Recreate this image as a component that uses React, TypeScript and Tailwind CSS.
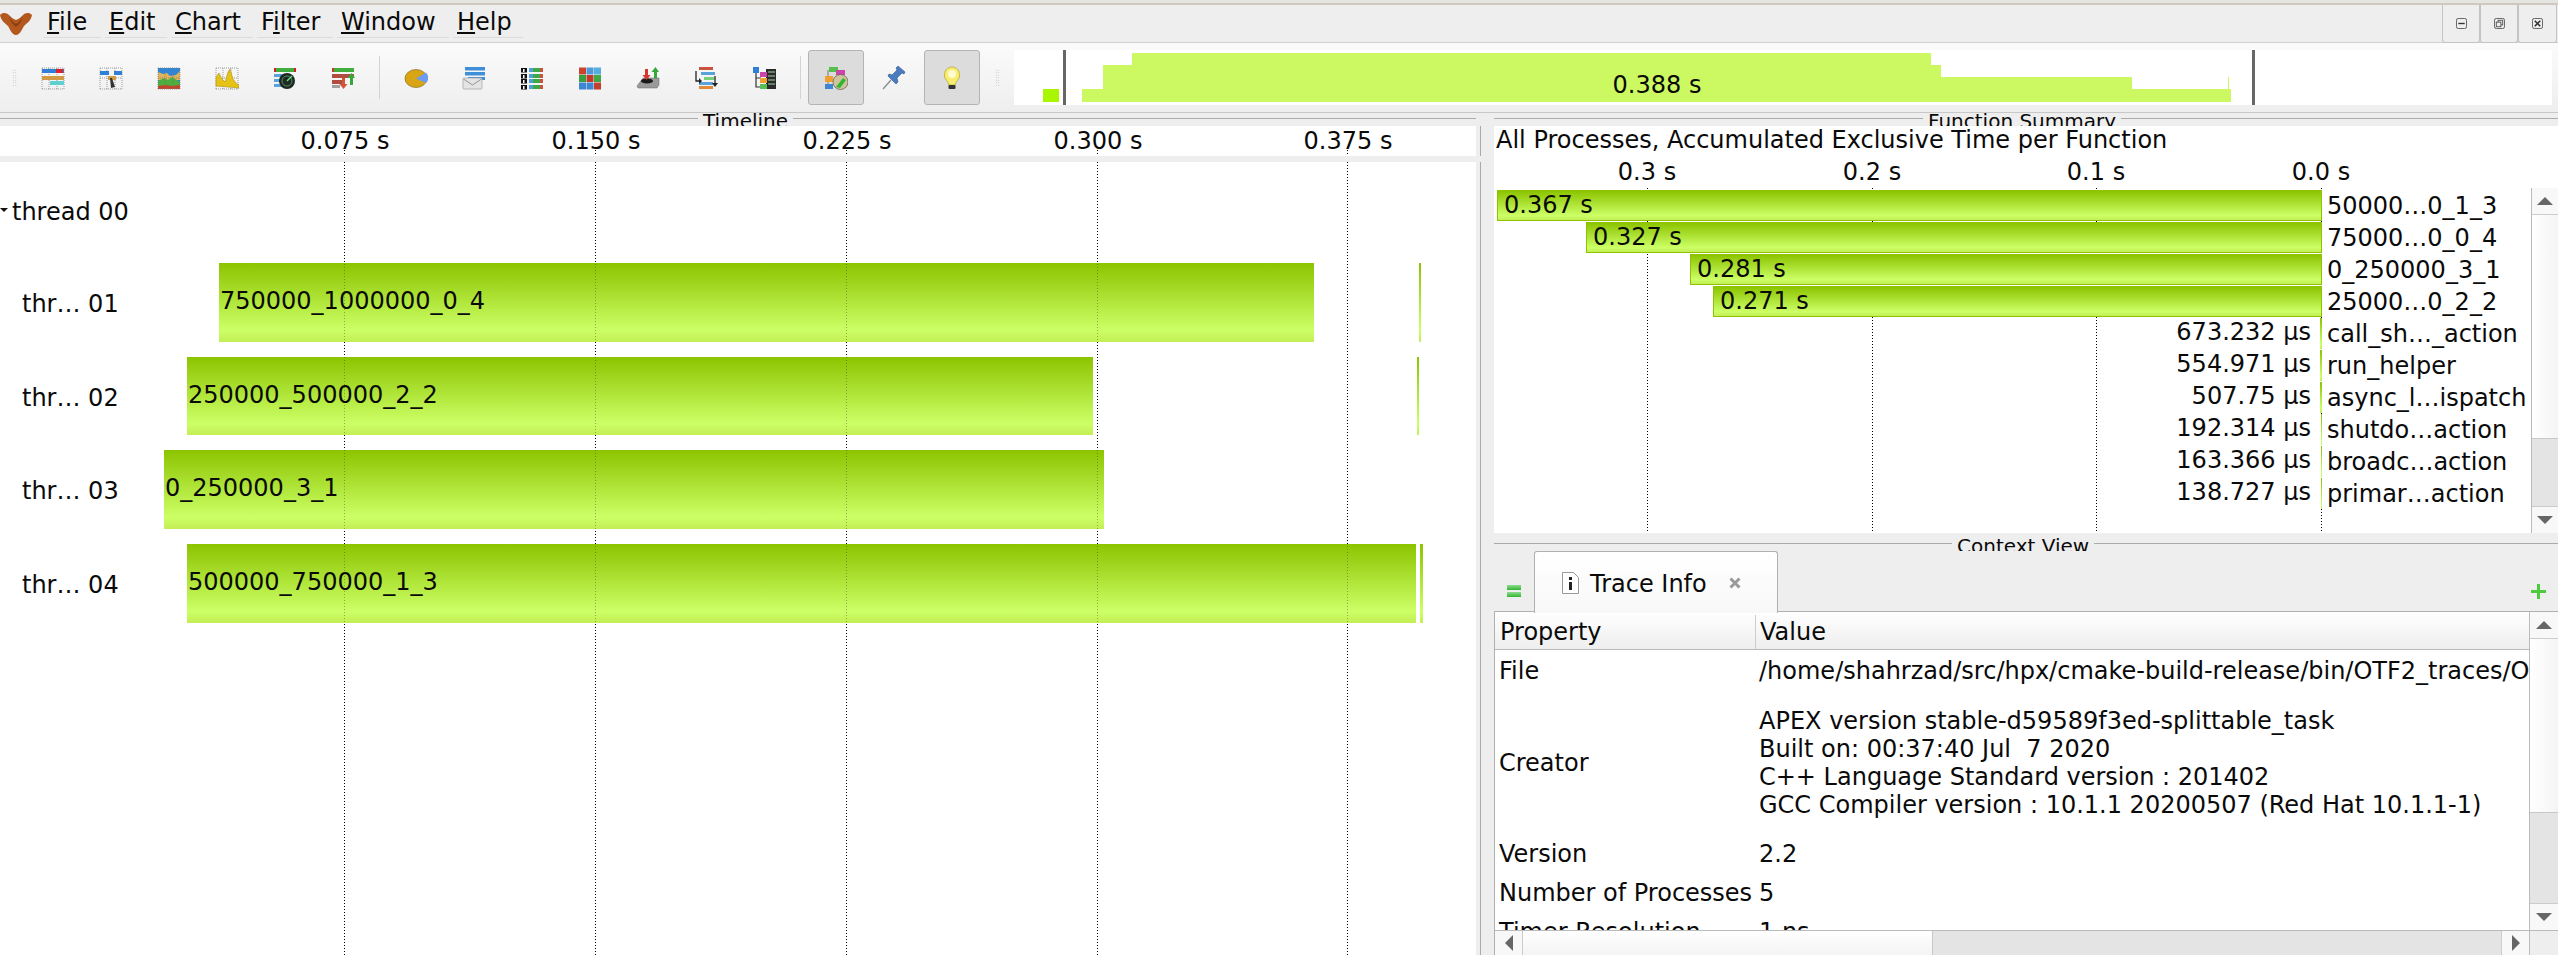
import type { ReactNode } from "react";

const menuItems = [
  { key: "F", rest: "ile", cls: "w-[58px]" },
  { key: "E", rest: "dit", cls: "w-[62px]" },
  { key: "C", rest: "hart", cls: "w-[82px]" },
  { key: "i", pre: "F", rest: "lter", cls: "w-[76px]" },
  { key: "W", rest: "indow", cls: "w-[112px]" },
  { key: "H", rest: "elp", cls: "w-[70px]" },
];

const timelineTicks = [
  { x: 344, label: "0.075 s" },
  { x: 595, label: "0.150 s" },
  { x: 846, label: "0.225 s" },
  { x: 1097, label: "0.300 s" },
  { x: 1347, label: "0.375 s" },
];

// offsets are relative to the top of the chart (y=162)
const timelineBars = [
  { left: 219, width: 1095, top: 101, height: 79, label: "750000_1000000_0_4" },
  { left: 1419, width: 2, top: 101, height: 79, label: "" },
  { left: 187, width: 906, top: 195, height: 78, label: "250000_500000_2_2" },
  { left: 1417, width: 2, top: 195, height: 78, label: "" },
  { left: 164, width: 940, top: 288, height: 79, label: "0_250000_3_1" },
  { left: 187, width: 1229, top: 382, height: 79, label: "500000_750000_1_3" },
  { left: 1420, width: 3, top: 382, height: 79, label: "" },
];

const threads = [
  { label: "thr… 01", top: 128 },
  { label: "thr… 02", top: 222 },
  { label: "thr… 03", top: 315 },
  { label: "thr… 04", top: 409 },
];

const overviewSteps = [
  { x: 1081, w: 21, top: 90 },
  { x: 1102, w: 29, top: 66 },
  { x: 1131, w: 799, top: 54 },
  { x: 1930, w: 10, top: 66 },
  { x: 1940, w: 191, top: 78 },
  { x: 2131, w: 99, top: 90 },
  { x: 2227, w: 1, top: 78 },
];

const summaryTicks = [
  { x: 1647, label: "0.3 s" },
  { x: 1872, label: "0.2 s" },
  { x: 2096, label: "0.1 s" },
  { x: 2321, label: "0.0 s" },
];

const summaryRows = [
  { name: "50000…0_1_3", left: 1497, value: "0.367 s" },
  { name: "75000…0_0_4", left: 1586, value: "0.327 s" },
  { name: "0_250000_3_1", left: 1690, value: "0.281 s" },
  { name: "25000…0_2_2", left: 1713, value: "0.271 s" },
  { name: "call_sh…_action", left: 2320, value: "673.232 µs" },
  { name: "run_helper", left: 2320, value: "554.971 µs" },
  { name: "async_l…ispatch", left: 2320, value: "507.75 µs" },
  { name: "shutdo…action", left: 2321, value: "192.314 µs" },
  { name: "broadc…action", left: 2321, value: "163.366 µs" },
  { name: "primar…action", left: 2321, value: "138.727 µs" },
];

const barGradient = "bg-[linear-gradient(to_bottom,#8cc400_0%,#ccff66_85%,#c4ee55_100%)]";

function DockTitle({ title, leftWidth }: { title: string; leftWidth: number }) {
  return (
    <div className="flex h-[13px] shrink-0 overflow-hidden">
      <div className="mt-[5px] h-px bg-[#aaaaaa]" style={{ width: leftWidth }} />
      <span className="-mt-[6px] whitespace-nowrap px-[5px] text-[20px] leading-[28px]">{title}</span>
      <div className="mt-[5px] h-px flex-1 bg-[#aaaaaa]" />
    </div>
  );
}

function Handle() {
  return <div className="h-[17px] w-[5px] bg-[radial-gradient(circle,#b5b5b5_0.6px,transparent_0.8px)] bg-[length:2.5px_2.5px]" />;
}

function Tri({ dir }: { dir: "up" | "down" | "left" | "right" }) {
  const pts = { up: "0,8 8,0 16,8", down: "0,0 16,0 8,8", left: "8,0 8,16 0,8", right: "0,0 0,16 8,8" }[dir];
  const box = dir === "up" || dir === "down" ? "0 0 16 8" : "0 0 8 16";
  return (
    <svg viewBox={box} className={dir === "up" || dir === "down" ? "h-[8px] w-[16px]" : "h-[16px] w-[8px]"}>
      <polygon points={pts} fill="#666666" />
    </svg>
  );
}

function VScroll({ thumb, track }: { thumb: string; track: string }) {
  return (
    <div className="flex h-full flex-col border-l border-[#bbbbbb] bg-[#e4e4e4]">
      <div className="flex h-[27px] items-center justify-center border-b border-[#cccccc] bg-[#f8f8f8]">
        <Tri dir="up" />
      </div>
      <div className={`${thumb} border-b border-[#c8c8c8] bg-[linear-gradient(to_right,#ffffff,#f4f4f4)]`} />
      <div className={track} />
      <div className="flex h-[27px] items-center justify-center border-t border-[#cccccc] bg-[#f8f8f8]">
        <Tri dir="down" />
      </div>
    </div>
  );
}

function Dotted({ left, top, bottom, faint }: { left: number; top: number; bottom?: number; faint?: boolean }) {
  return (
    <div
      className={`absolute w-px bg-[repeating-linear-gradient(to_bottom,#000000_0,#000000_1px,transparent_1px,transparent_3px)] ${faint ? "opacity-30" : ""}`}
      style={{ left, top, bottom: bottom ?? 0 }}
    />
  );
}

/* ---------- toolbar icons ---------- */

function Ico({ children }: { children: ReactNode }) {
  return (
    <svg viewBox="0 0 24 24" className="h-[24px] w-[24px]">
      {children}
    </svg>
  );
}

function GridLines() {
  return (
    <g stroke="#777777" strokeWidth="0.7" strokeDasharray="1 1">
      <path d="M1 2V23M8 2V23M16 2V23M23 2V23M1 2H23M1 12H23M1 23H23" fill="none" />
    </g>
  );
}

const icons: ReactNode[] = [
  <Ico key="a">
    <GridLines />
    <rect x="1" y="3" width="22" height="4" fill="#2f7fd6" />
    <rect x="15" y="3" width="7" height="4" fill="#e0202a" />
    <rect x="1" y="10" width="22" height="4" fill="#d19a45" />
    <rect x="9" y="15" width="14" height="4" fill="#5fd0d0" />
  </Ico>,
  <Ico key="b">
    <GridLines />
    <rect x="1" y="5" width="9" height="4" fill="#2f7fd6" />
    <rect x="15" y="5" width="8" height="4" fill="#2f7fd6" />
    <rect x="9" y="10" width="8" height="4" fill="#d19a45" />
    <path d="M11 12l2 0 3 9-4 1z" fill="#333333" />
  </Ico>,
  <Ico key="c">
    <rect x="1" y="2" width="22" height="21" fill="#2f86d6" />
    <path d="M1 6l5 2 4-1 3 3 6-1 4-4v9H1z" fill="#e2b45a" />
    <path d="M1 15l6-3 4 2 4-3 8 5v5H1z" fill="#4cae3d" />
    <path d="M1 20l8-1 6 1 8-1v4H1z" fill="#c4452c" />
    <GridLines />
  </Ico>,
  <Ico key="d">
    <GridLines />
    <path d="M1 20V11l3-4 3 6 3 3 3-10 2-3 3 10 3 4 3 2v3z" fill="#e6c214" stroke="#9b8410" strokeWidth="0.5" />
  </Ico>,
  <Ico key="e">
    <rect x="1" y="2" width="22" height="4" fill="#3fae3d" />
    <rect x="1" y="2" width="2" height="4" fill="#d02020" />
    <rect x="21" y="2" width="2" height="4" fill="#d02020" />
    <rect x="1" y="8" width="9" height="3" fill="#58a3dc" />
    <rect x="1" y="13" width="7" height="3" fill="#58a3dc" />
    <rect x="1" y="18" width="8" height="3" fill="#58a3dc" />
    <circle cx="14" cy="15" r="8" fill="#1c2a22" />
    <circle cx="14" cy="15" r="5" fill="none" stroke="#5c8a66" strokeWidth="1" />
    <path d="M14 15l5-5" stroke="#62e082" strokeWidth="1.5" />
  </Ico>,
  <Ico key="f">
    <rect x="1" y="2" width="22" height="4" fill="#3fae3d" />
    <rect x="1" y="2" width="2" height="4" fill="#c93a2a" />
    <rect x="1" y="8" width="22" height="4" fill="#b04c40" />
    <rect x="1" y="14" width="10" height="4" fill="#b04c40" />
    <rect x="1" y="19" width="8" height="3" fill="#a0a0a0" />
    <path d="M13 13v6h-2.500l4 5 4-5H16v-6z" fill="#d2553a" transform="translate(-2 -1)" />
    <path d="M19 19v-7h-2.500l4-5 3.500 5H22v7z" fill="#36a83a" />
  </Ico>,
  <Ico key="g">
    <ellipse cx="12" cy="12.500" rx="11" ry="9" fill="#d9a514" stroke="#8a6a10" strokeWidth="0.7" />
    <path d="M12 12.500L22 6.500A11 9 0 0 1 22 17z" fill="#6d9cf0" />
  </Ico>,
  <Ico key="h">
    <rect x="3" y="1" width="20" height="3.500" fill="#3f90d8" />
    <rect x="3" y="6" width="20" height="3.500" fill="#3f90d8" />
    <rect x="6" y="11" width="17" height="3" fill="#3f90d8" />
    <rect x="1" y="12" width="19" height="11" rx="1" fill="#e4e4e4" stroke="#a0a0a0" strokeWidth="0.7" />
    <path d="M1.500 13l9 6 9-6" fill="none" stroke="#8a8a8a" strokeWidth="0.9" />
  </Ico>,
  <Ico key="i">
    {[2, 8, 13, 19].map((y) => (
      <g key={y}>
        <rect x="1" y={y} width="6" height="4.500" fill="#111111" />
        <rect x="3" y={y + 1} width="1.500" height="3" fill="#ffffff" />
        <rect x="9" y={y} width="14" height="4" fill="#3ea845" />
        <rect x="9" y={y} width="4" height="4" fill="#4f9fdc" />
        <rect x="20" y={y} width="3" height="4" fill="#c9533e" />
      </g>
    ))}
  </Ico>,
  <Ico key="j">
    {[0, 1, 2].map((r) =>
      [0, 1, 2].map((c) => (
        <rect
          key={`${r}-${c}`}
          x={1 + c * 7.500}
          y={1.500 + r * 7.500}
          width="7"
          height="7"
          fill={["#c9442e", "#4e9ad6", "#54aee0", "#3a9d3e", "#c0392b", "#3fa845", "#3f86d2", "#3f86d2", "#c0402c"][r * 3 + c]}
        />
      )),
    )}
  </Ico>,
  <Ico key="k">
    <path d="M1 20l6-8h16v7l-2 3H2z" fill="#9a9a9a" stroke="#666666" strokeWidth="0.5" />
    <ellipse cx="11" cy="15" rx="6" ry="2.500" fill="#1a1a1a" />
    <path d="M9 3v6H6.500l4 5 4-5H12V3z" fill="#d8352b" />
    <path d="M18 12V6h-2.500l4-5 3.500 5H21v6z" fill="#36a83a" />
  </Ico>,
  <Ico key="l">
    <rect x="5" y="1" width="14" height="3" fill="#c9533e" />
    <rect x="7" y="6" width="14" height="3" fill="#58a3dc" />
    <rect x="10" y="11" width="10" height="3" fill="#77d077" />
    <rect x="5" y="16" width="14" height="3" fill="#58a3dc" />
    <rect x="5" y="20" width="14" height="3" fill="#e08a3a" />
    <path d="M2 5v10h4" fill="none" stroke="#222222" strokeWidth="1.300" />
    <path d="M5 12l3 3-3 3z" fill="#222222" />
    <path d="M21 10v8" stroke="#222222" strokeWidth="1.300" />
    <path d="M18 17h6l-3 4z" fill="#222222" />
  </Ico>,
  <Ico key="m">
    <rect x="1" y="1" width="6" height="6" fill="#2f7fd6" />
    <path d="M4 7v14h5M4 12h5" fill="none" stroke="#333333" strokeWidth="1.200" />
    <rect x="14" y="3" width="10" height="20" fill="#2b2b2b" />
    <rect x="8" y="6" width="7" height="5" fill="#cc44aa" />
    <rect x="8" y="12" width="7" height="5" fill="#f0a030" />
    <rect x="8" y="18" width="7" height="5" fill="#55c055" />
    <path d="M16 6h7M16 10h7M16 14h7M16 18h7" stroke="#a8d8a8" strokeWidth="1" />
  </Ico>,
];

const treeIcon = (
  <Ico>
    <path d="M4 4v17" stroke="#777777" strokeWidth="1" />
    <rect x="5" y="1" width="9" height="5" fill="#55c04a" />
    <rect x="1" y="10" width="8" height="6" fill="#f0a030" />
    <rect x="1" y="18" width="8" height="5" fill="#3f86d2" />
    <rect x="12" y="4" width="9" height="5" fill="#cc44aa" />
    <circle cx="16.500" cy="16" r="7.500" fill="#cfc3a0" stroke="#6b6350" strokeWidth="0.8" />
    <path d="M12 21l7-9 3 2-6 8z" fill="#2fb82f" />
  </Ico>
);

const pinIcon = (
  <Ico>
    <path d="M1 23l8-9" stroke="#8a8f98" strokeWidth="1.400" />
    <path d="M6 10l8 8 2-2-1-4 5-5 2 1 1-2-7-6-2 2 1 2-5 5-3-1z" fill="#4c7cc0" stroke="#2f5590" strokeWidth="0.6" />
  </Ico>
);

const bulbIcon = (
  <Ico>
    <path d="M12 1a8 8 0 0 0-5 14c1 1 1.500 2 1.500 4h7c0-2 .5-3 1.500-4a8 8 0 0 0-5-14z" fill="#f7ee70" stroke="#b6a93a" strokeWidth="0.8" />
    <circle cx="12" cy="8" r="4" fill="#fffbd0" />
    <rect x="8.500" y="19" width="7" height="4" rx="1" fill="#333333" />
  </Ico>
);

function Logo() {
  return (
    <svg viewBox="0 0 32 23" className="h-[23px] w-[32px] shrink-0">
      <path
        d="M0 3C3 0 7 1 9 3c2 2 4 4 7 5 3-1 5-3 7-5 2-2 6-3 9 0-1 6-5 8-8 11-2 3-4 9-8 9s-6-6-8-9C5 11 1 9 0 3z"
        fill="#b3581f"
      />
      <path d="M9 5c3 4 5 6 7 7 2-1 4-3 7-7-2 5-4 8-7 10-3-2-5-5-7-10z" fill="#8c3f12" />
    </svg>
  );
}

function Tool({ children, checked }: { children: ReactNode; checked?: boolean }) {
  return (
    <div className="flex w-[58px] items-center justify-center">
      <div
        className={`flex h-[55px] w-[56px] items-center justify-center rounded-[3px] ${
          checked ? "border border-[#b4b4b4] bg-[#dcdcdc]" : ""
        }`}
      >
        {children}
      </div>
    </div>
  );
}

function WinButton({ children, cls }: { children: ReactNode; cls: string }) {
  return (
    <div className={`flex h-[38px] items-center justify-center rounded-b-[3px] border border-t-0 border-[#c4c4c4] ${cls}`}>
      {children}
    </div>
  );
}

function Toolbar() {
  return (
    <div className="flex h-[70px] shrink-0 items-center border-b border-[#c8c8c8] bg-[linear-gradient(to_bottom,#fbfbfb,#eeeeee)]">
      <div className="flex w-[24px] justify-center pl-[4px]">
        <Handle />
      </div>
      {icons.slice(0, 6).map((ic, i) => (
        <Tool key={i}>{ic}</Tool>
      ))}
      <div className="mx-[7px] h-[43px] w-px bg-[#d4d4d4]" />
      {icons.slice(6).map((ic, i) => (
        <Tool key={i}>{ic}</Tool>
      ))}
      <div className="ml-[7px] mr-[6px] h-[43px] w-px bg-[#d4d4d4]" />
      <Tool checked>{treeIcon}</Tool>
      <Tool>{pinIcon}</Tool>
      <Tool checked>{bulbIcon}</Tool>
      <div className="flex w-[33px] justify-center">
        <Handle />
      </div>
      <div className="relative h-[55px] w-[1538px] bg-white">
        <div className="absolute left-[29px] top-[39px] h-[13px] w-[16px] bg-[#aaf500]" />
        {overviewSteps.map((s) => (
          <div
            key={s.x}
            className="absolute bg-[#ccf862]"
            style={{ left: s.x - 1013, width: s.w, top: s.top - 51, height: 103 - s.top }}
          />
        ))}
        <div className="absolute left-[49px] top-0 h-full w-[3px] bg-[#666666]" />
        <div className="absolute left-[1238px] top-0 h-full w-[3px] bg-[#666666]" />
        <div className="absolute left-0 top-0 flex h-full w-[1286px] items-center justify-center pt-[14px]">0.388 s</div>
      </div>
    </div>
  );
}

function TimelinePanel() {
  return (
    <div className="flex w-[1476px] shrink-0 flex-col">
      <DockTitle title="Timeline" leftWidth={698} />
      <div className="relative h-[30px] shrink-0 overflow-hidden bg-white">
        {timelineTicks.map((t) => (
          <div key={t.x}>
            <span className="absolute top-[1px] w-[120px] -translate-x-1/2 text-center leading-[28px]" style={{ left: t.x + 1 }}>
              {t.label}
            </span>
            <Dotted left={t.x} top={24} />
          </div>
        ))}
      </div>
      <div className="h-[6px] shrink-0 bg-[#eeeeee]" />
      <div className="relative flex-1 overflow-hidden bg-white">
        {timelineTicks.map((t) => (
          <Dotted key={t.x} left={t.x} top={0} />
        ))}
        <svg viewBox="0 0 8 4" className="absolute left-0 top-[46px] h-[4px] w-[8px]">
          <polygon points="0,0 8,0 4,4" fill="#111111" />
        </svg>
        <span className="absolute left-[12px] top-[36px] leading-[28px]">thread 00</span>
        {threads.map((t) => (
          <span key={t.label} className="absolute left-[22px] leading-[28px]" style={{ top: t.top }}>
            {t.label}
          </span>
        ))}
        {timelineBars.map((b) => (
          <div
            key={b.left}
            className={`absolute flex items-center whitespace-nowrap pb-[3px] pl-[1px] ${barGradient}`}
            style={{ left: b.left, width: b.width, top: b.top, height: b.height }}
          >
            {b.label}
          </div>
        ))}
        {timelineTicks.map((t) => (
          <Dotted key={t.x} left={t.x} top={0} faint />
        ))}
      </div>
    </div>
  );
}

function SummaryPanel() {
  return (
    <div className="flex h-[407px] shrink-0 bg-white">
      <div className="relative h-full w-[1037px] shrink-0 overflow-hidden">
        <div className="absolute left-[2px] top-0 whitespace-nowrap leading-[28px]">
          All Processes, Accumulated Exclusive Time per Function
        </div>
        {summaryTicks.map((t) => (
          <div key={t.x}>
            <span
              className="absolute top-[32px] w-[100px] -translate-x-1/2 text-center leading-[28px]"
              style={{ left: t.x - 1494 }}
            >
              {t.label}
            </span>
            <Dotted left={t.x - 1494} top={62} />
          </div>
        ))}
        {summaryRows.map((r, i) => {
          const top = 64 + i * 32;
          const big = i < 4;
          return (
            <div key={r.name}>
              {big ? (
                <div
                  className={`absolute flex items-center border border-[#8cc400] pb-[1px] pl-[6px] ${barGradient}`}
                  style={{ left: r.left - 1494, width: 2322 - r.left, top, height: 31 }}
                >
                  {r.value}
                </div>
              ) : (
                <>
                  <div
                    className={`absolute ${barGradient}`}
                    style={{ left: r.left - 1494, width: 2322 - r.left, top, height: 31 }}
                  />
                  <span className="absolute left-0 w-[817px] text-right leading-[28px]" style={{ top: top }}>
                    {r.value}
                  </span>
                </>
              )}
              <span className="absolute left-[833px] whitespace-nowrap leading-[28px]" style={{ top: top + 2 }}>
                {r.name}
              </span>
            </div>
          );
        })}
      </div>
      <div className="flex-1 pt-[62px]">
        <VScroll thumb="h-[224px]" track="flex-1" />
      </div>
    </div>
  );
}

function TabBar() {
  return (
    <div className="relative z-10 flex h-[60px] shrink-0">
      <div className="flex w-[40px] items-end pb-[14px] pl-[13px]">
        <div className="flex flex-col gap-[2px]">
          <div className="h-[5px] w-[14px] bg-[linear-gradient(to_bottom,#8fdc8f,#2fb52f)]" />
          <div className="h-[5px] w-[14px] bg-[linear-gradient(to_bottom,#8fdc8f,#2fb52f)]" />
        </div>
      </div>
      <div className="flex h-[62px] w-[244px] items-center rounded-t-[3px] border border-b-0 border-[#b0b0b0] bg-[linear-gradient(to_bottom,#ffffff,#f8f8f8)] pl-[27px]">
        <svg viewBox="0 0 17 22" className="h-[22px] w-[17px]">
          <path d="M.5.5h11l5 5v16H.5z" fill="#ffffff" stroke="#999999" />
          <rect x="7" y="5" width="3" height="3" fill="#222222" />
          <rect x="7" y="10" width="3" height="8" fill="#222222" />
        </svg>
        <span className="ml-[11px] pt-[2px] leading-[28px]">Trace Info</span>
        <svg viewBox="0 0 12 12" className="ml-[22px] h-[12px] w-[12px]">
          <path d="M1.500 1.500l9 9M10.500 1.500l-9 9" stroke="#9a9a9a" strokeWidth="3" />
        </svg>
      </div>
      <div className="flex flex-1 items-end justify-end pb-[12px] pr-[12px]">
        <svg viewBox="0 0 15 15" className="h-[15px] w-[15px]">
          <path d="M6 0h3v6h6v3H9v6H6V9H0V6h6z" fill="#4ccb3c" />
        </svg>
      </div>
    </div>
  );
}

function InfoRow({ name, cls, children }: { name: string; cls: string; children: ReactNode }) {
  return (
    <div className={`flex items-center pt-[2px] ${cls}`}>
      <div className="w-[261px] shrink-0 pl-[4px]">{name}</div>
      <div className="min-w-0 flex-1 overflow-hidden whitespace-pre pl-[3px]">{children}</div>
    </div>
  );
}

function TraceTable() {
  return (
    <div className="flex flex-1 flex-col overflow-hidden border-l border-t border-[#b0b0b0] bg-white">
      <div className="flex min-h-0 flex-1">
        <div className="w-[1034px] shrink-0 overflow-hidden">
          <div className="flex h-[38px] items-center border-b border-[#bbbbbb] bg-[linear-gradient(to_bottom,#ffffff,#eeeeee)] pt-[3px]">
            <div className="flex h-full w-[261px] items-center border-r border-[#cccccc] pl-[5px]">Property</div>
            <div className="pl-[4px]">Value</div>
          </div>
          <InfoRow name="File" cls="h-[40px]">
            /home/shahrzad/src/hpx/cmake-build-release/bin/OTF2_traces/OTF2_archive
          </InfoRow>
          <InfoRow name="Creator" cls="h-[143px]">
            <div className="leading-[28px]">
              <div>APEX version stable-d59589f3ed-splittable_task</div>
              <div>Built on: 00:37:40 Jul  7 2020</div>
              <div>C++ Language Standard version : 201402</div>
              <div>GCC Compiler version : 10.1.1 20200507 (Red Hat 10.1.1-1)</div>
            </div>
          </InfoRow>
          <InfoRow name="Version" cls="h-[39px]">2.2</InfoRow>
          <InfoRow name="Number of Processes" cls="h-[39px]">5</InfoRow>
          <InfoRow name="Timer Resolution" cls="h-[39px]">1 ns</InfoRow>
        </div>
        <div className="flex-1">
          <VScroll thumb="h-[174px]" track="flex-1" />
        </div>
      </div>
      <div className="flex h-[25px] shrink-0 border-t border-[#bbbbbb] bg-[#e4e4e4]">
        <div className="flex w-[28px] items-center justify-center border-r border-[#cccccc] bg-[#f8f8f8]">
          <Tri dir="left" />
        </div>
        <div className="w-[410px] border-r border-[#c8c8c8] bg-[linear-gradient(to_bottom,#ffffff,#f4f4f4)]" />
        <div className="flex-1" />
        <div className="flex w-[28px] items-center justify-center border-l border-[#cccccc] bg-[#f8f8f8]">
          <Tri dir="right" />
        </div>
        <div className="w-[29px] border-l border-[#bbbbbb] bg-[#eeeeee]" />
      </div>
    </div>
  );
}

export default function App() {
  return (
    <div className="flex h-[955px] w-[2558px] flex-col overflow-hidden bg-[#eeeeee] font-['DejaVu_Sans',sans-serif] text-[24px] text-[#0a0a0a]">
      <div className="h-[3px] shrink-0 bg-[#e6e4df]" />
      <div className="h-[2px] shrink-0 bg-[#cdc9c1]" />

      <div className="flex h-[38px] shrink-0 items-start border-b border-[#d0d0d0]">
        <div className="flex w-[43px] pt-[7px]">
          <Logo />
        </div>
        {menuItems.map((m) => (
          <div key={m.key} className={`mr-[4px] h-[33px] border-b border-[#dcdcdc] pl-[4px] pt-[3px] leading-[28px] ${m.cls}`}>
            {m.pre}
            <span className="underline decoration-2 underline-offset-2">{m.key}</span>
            {m.rest}
          </div>
        ))}
        <div className="flex-1" />
        <WinButton cls="w-[38px]">
          <svg viewBox="0 0 12 12" className="h-[11px] w-[11px]">
            <rect x=".5" y=".5" width="11" height="11" rx="2" fill="none" stroke="#555555" />
            <path d="M2.500 6h7" stroke="#333333" strokeWidth="1.500" />
          </svg>
        </WinButton>
        <WinButton cls="w-[38px]">
          <svg viewBox="0 0 12 12" className="h-[11px] w-[11px]">
            <rect x=".5" y=".5" width="11" height="11" rx="2" fill="none" stroke="#555555" />
            <rect x="4.500" y="2.500" width="5" height="5" fill="none" stroke="#555555" />
            <rect x="2.500" y="4.500" width="5" height="5" fill="#eeeeee" stroke="#555555" />
          </svg>
        </WinButton>
        <WinButton cls="w-[39px] mr-px">
          <svg viewBox="0 0 12 12" className="h-[11px] w-[11px]">
            <rect x=".5" y=".5" width="11" height="11" rx="2" fill="none" stroke="#555555" />
            <path d="M3 3l6 6M9 3l-6 6" stroke="#333333" strokeWidth="1.800" />
          </svg>
        </WinButton>
      </div>

      <Toolbar />

      <div className="flex min-h-0 flex-1">
        <TimelinePanel />
        <div className="flex w-[18px] shrink-0 flex-col pl-[4px] pt-[13px]">
          <div className="h-[30px] w-px bg-[#aaaaaa]" />
          <div className="mt-[6px] flex-1 w-px bg-[#aaaaaa]" />
        </div>
        <div className="flex min-w-0 flex-1 flex-col">
          <DockTitle title="Function Summary" leftWidth={429} />
          <SummaryPanel />
          <div className="h-[5px] shrink-0" />
          <DockTitle title="Context View" leftWidth={458} />
          <TabBar />
          <TraceTable />
        </div>
      </div>
    </div>
  );
}
